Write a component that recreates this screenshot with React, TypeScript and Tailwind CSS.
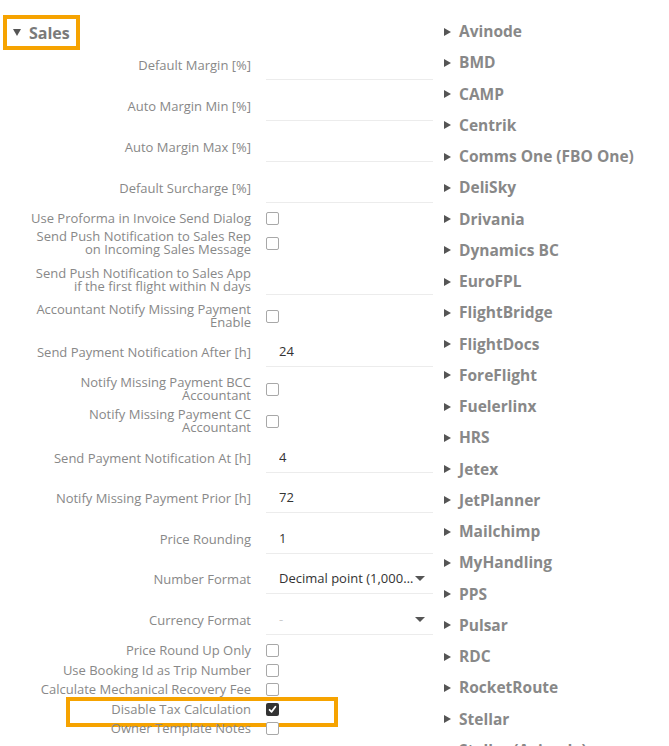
import React from 'react';

type Row = {
  label: string[];
  kind: 'input' | 'check' | 'select';
  value?: string;
  checked?: boolean;
  placeholder?: boolean;
  h: string;
  mt: string;
  boxed?: boolean;
};

const rows: Row[] = [
  { label: ['Default Margin [%]'], kind: 'input', h: 'h-[30px]', mt: 'mt-0' },
  { label: ['Auto Margin Min [%]'], kind: 'input', h: 'h-[30px]', mt: 'mt-[11px]' },
  { label: ['Auto Margin Max [%]'], kind: 'input', h: 'h-[30px]', mt: 'mt-[11px]' },
  { label: ['Default Surcharge [%]'], kind: 'input', h: 'h-[30px]', mt: 'mt-[11px]' },
  { label: ['Use Proforma in Invoice Send Dialog'], kind: 'check', h: 'h-[20px]', mt: 'mt-[5px]' },
  { label: ['Send Push Notification to Sales Rep', 'on Incoming Sales Message'], kind: 'check', h: 'h-[26px]', mt: 'mt-[2px]' },
  { label: ['Send Push Notification to Sales App', 'if the first flight within N days'], kind: 'input', h: 'h-[30px]', mt: 'mt-[9px]' },
  { label: ['Accountant Notify Missing Payment', 'Enable'], kind: 'check', h: 'h-[26px]', mt: 'mt-[8px]' },
  { label: ['Send Payment Notification After [h]'], kind: 'input', value: '24', h: 'h-[30px]', mt: 'mt-[8px]' },
  { label: ['Notify Missing Payment BCC', 'Accountant'], kind: 'check', h: 'h-[26px]', mt: 'mt-[9px]' },
  { label: ['Notify Missing Payment CC', 'Accountant'], kind: 'check', h: 'h-[26px]', mt: 'mt-[6px]' },
  { label: ['Send Payment Notification At [h]'], kind: 'input', value: '4', h: 'h-[30px]', mt: 'mt-[9px]' },
  { label: ['Notify Missing Payment Prior [h]'], kind: 'input', value: '72', h: 'h-[30px]', mt: 'mt-[10px]' },
  { label: ['Price Rounding'], kind: 'input', value: '1', h: 'h-[30px]', mt: 'mt-[11px]' },
  { label: ['Number Format'], kind: 'select', value: 'Decimal point (1,000.00)', h: 'h-[30px]', mt: 'mt-[10px]' },
  { label: ['Currency Format'], kind: 'select', value: '-', placeholder: true, h: 'h-[30px]', mt: 'mt-[11px]' },
  { label: ['Price Round Up Only'], kind: 'check', h: 'h-[19.5px]', mt: 'mt-[6px]' },
  { label: ['Use Booking Id as Trip Number'], kind: 'check', h: 'h-[19.5px]', mt: 'mt-0' },
  { label: ['Calculate Mechanical Recovery Fee'], kind: 'check', h: 'h-[19.5px]', mt: 'mt-0' },
  { label: ['Disable Tax Calculation'], kind: 'check', checked: true, boxed: true, h: 'h-[19.5px]', mt: 'mt-0' },
  { label: ['Owner Template Notes'], kind: 'check', h: 'h-[19.5px]', mt: 'mt-0' },
];

const integrations = [
  'Avinode', 'BMD', 'CAMP', 'Centrik', 'Comms One (FBO One)', 'DeliSky', 'Drivania',
  'Dynamics BC', 'EuroFPL', 'FlightBridge', 'FlightDocs', 'ForeFlight', 'Fuelerlinx',
  'HRS', 'Jetex', 'JetPlanner', 'Mailchimp', 'MyHandling', 'PPS', 'Pulsar', 'RDC',
  'RocketRoute', 'Stellar', 'Stellar (Avinode)',
];

const Checkbox = ({ checked }: { checked?: boolean }) =>
  checked ? (
    <span className="w-[13px] h-[13px] rounded-[2px] bg-[#333] flex items-center justify-center">
      <svg width="9" height="9" viewBox="0 0 9 9">
        <path d="M1.6 4.8 L3.6 6.8 L7.4 1.8" fill="none" stroke="#fff" strokeWidth="1.8" strokeLinecap="round" strokeLinejoin="round" />
      </svg>
    </span>
  ) : (
    <span className="w-[13px] h-[13px] rounded-[2px] border border-[#a8a8a8] bg-white" />
  );

const Caret = () => (
  <svg width="10" height="5" viewBox="0 0 10 5" className="shrink-0">
    <path d="M0 0 H10 L5 5 Z" fill="#555" />
  </svg>
);

const FormRow = ({ row }: { row: Row }) => (
  <div className={`relative flex ${row.h} ${row.mt}`}>
    <div className="w-[251px] flex flex-col items-end justify-center text-right text-[13px] leading-[13px] text-[#888]">
      {row.label.map(l => (
        <span key={l} className="whitespace-nowrap">{l}</span>
      ))}
    </div>
    {row.kind === 'check' ? (
      <div className="ml-[15px] w-[167px] flex items-center">
        <Checkbox checked={row.checked} />
      </div>
    ) : (
      <div className="ml-[15px] w-[167px] flex items-center border-b border-[#ececec] pl-[13px] pr-[8px] text-[13px] text-[#333]">
        <span className={`flex-1 truncate ${row.placeholder ? 'text-[#ccc]' : ''}`}>{row.value}</span>
        {row.kind === 'select' && <Caret />}
      </div>
    )}
    {row.boxed && (
      <div className="absolute left-[66px] top-[-3px] w-[272px] h-[30px] border-4 border-[#f6a300] pointer-events-none" />
    )}
  </div>
);

export default function App() {
  return (
    <div className="w-[669px] h-[746px] overflow-hidden bg-white flex font-['Open_Sans',sans-serif]">
      {/* Sales settings */}
      <div className="w-[440px] shrink-0">
        <div className="ml-[3px] mt-[15px] w-[77px] h-[35px] border-4 border-[#f6a300] flex items-center pl-[6px] gap-[8px]">
          <svg width="8" height="7" viewBox="0 0 8 7">
            <path d="M0 0 H8 L4 7 Z" fill="#555" />
          </svg>
          <span className="text-[16px] font-bold text-[#7a7a7a] leading-none">Sales</span>
        </div>
        <div className="flex flex-col">
          {rows.map(r => (
            <FormRow key={r.label.join(' ')} row={r} />
          ))}
        </div>
      </div>

      {/* Integrations */}
      <div className="pl-[4px] pt-[16px] flex flex-col">
        {integrations.map(name => (
          <div key={name} className="h-[31.25px] flex items-center gap-[8px] shrink-0">
            <svg width="7" height="8" viewBox="0 0 7 8">
              <path d="M0 0 L7 4 L0 8 Z" fill="#555" />
            </svg>
            <span className="text-[15.5px] font-bold text-[#888] whitespace-nowrap">{name}</span>
          </div>
        ))}
      </div>
    </div>
  );
}
